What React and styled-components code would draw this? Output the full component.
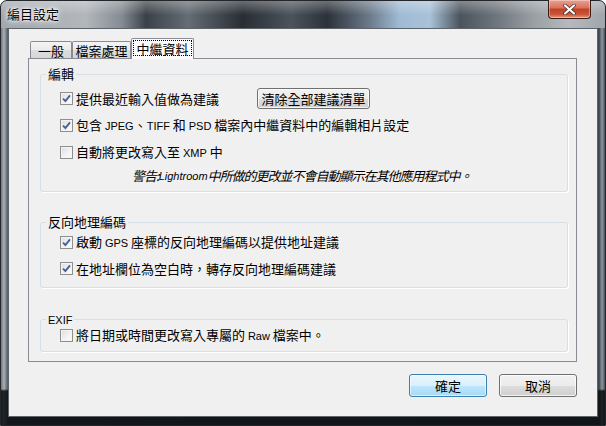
import React from 'react';
import styled, { createGlobalStyle } from 'styled-components';

const GlobalStyle = createGlobalStyle`
  html, body {
    margin: 0;
    padding: 0;
    background: #ffffff;
  }
  body {
    font-family: "Noto Sans CJK TC", "Liberation Sans", sans-serif;
    font-size: 13px;
    color: #000;
  }
`;

const Window = styled.div`
  width: 606px;
  height: 426px;
  box-sizing: border-box;
  display: flex;
  flex-direction: column;
  border: 1px solid #23272b;
  border-radius: 7px 7px 0 0;
  background:
    linear-gradient(180deg, rgba(255,255,255,0.3) 0px, rgba(255,255,255,0) 14px) top / 100% 27px no-repeat,
    linear-gradient(90deg, #a3a8ad 0%, #b3b7bb 14%, #858b92 20%, #3b4148 24%, #656c73 31%, #282e34 40%,
      #4c535b 48%, #2c3239 54%, #6b7a8a 61%, #9fbbd4 66%, #a8c2d8 71%, #4b545d 76%, #6e757c 82%,
      #999ea3 88%, #b6babe 94%, #a0a5aa 100%) top / 100% 27px no-repeat,
    linear-gradient(180deg, rgba(0,0,0,0) 0px, rgba(0,0,0,0) 388px, rgba(10,12,14,0.85) 390px),
    linear-gradient(90deg, #6f767d 0px, #a9afb5 3px, #50575e 7px, #3e444b 598px, #8d97a1 601px, #33393f 605px);
`;

const TitleBar = styled.div`
  height: 27px;
  display: flex;
  justify-content: space-between;
  align-items: flex-start;
  padding-left: 6px;
`;

const Title = styled.div`
  padding-top: 4px;
  line-height: 17px;
  font-size: 13px;
  text-shadow: 0 0 6px #fff, 0 0 4px #fff, 0 0 2px #fff;
`;

const CloseButton = styled.div`
  width: 43px;
  height: 19px;
  margin: -1px 14px 0 0;
  box-sizing: border-box;
  border: 1px solid #3a1a16;
  border-top: none;
  border-radius: 0 0 4px 4px;
  background: linear-gradient(180deg, #e8a293 0%, #d8705a 45%, #c23f22 50%, #c9553a 80%, #e79a7e 100%);
  box-shadow: inset 0 0 0 1px rgba(255,255,255,0.35);
  display: flex;
  align-items: center;
  justify-content: center;
`;

const Client = styled.div`
  flex: 1;
  margin: 0 7px 8px 7px;
  box-sizing: border-box;
  border: 1px solid #5d646b;
  background: #f0f0f0;
  display: flex;
  flex-direction: column;
  padding: 9px 20px 19px 19px;
`;

const TabStrip = styled.div`
  height: 20px;
  display: flex;
  align-items: flex-end;
  padding-left: 2px;
`;

const Tab = styled.div`
  box-sizing: border-box;
  width: ${p => p.$w}px;
  height: ${p => (p.$active ? 21 : 17)}px;
  margin-bottom: ${p => (p.$active ? -1 : 0)}px;
  position: relative;
  z-index: ${p => (p.$active ? 1 : 0)};
  border: 1px solid #898c95;
  border-bottom: none;
  border-radius: 2px 2px 0 0;
  background: ${p => (p.$active ? '#fbfbfb' : 'linear-gradient(180deg, #f4f4f4 0%, #ebebeb 50%, #dddddd 51%, #d6d6d6 100%)')};
  display: flex;
  padding: ${p => (p.$active ? '1px 1px 3px 1px' : '0')};
  align-items: center;
  justify-content: center;
  line-height: 15px;
`;

const FocusText = styled.span`
  flex: 1;
  align-self: stretch;
  display: flex;
  align-items: center;
  justify-content: center;
  outline: 1px dotted #000;
  outline-offset: -1px;
`;

const Panel = styled.div`
  border: 1px solid #898c95;
  background: #f0f0f0;
  padding: 8px 8px 9px 11px;
  display: flex;
  flex-direction: column;
`;

const Group = styled.fieldset`
  margin: 0;
  padding: 0;
  border: 1px solid #d5dfe5;
  border-radius: 3px;
  box-shadow: 1px 1px 0 #ffffff;
  margin-bottom: ${p => p.$after || 0}px;
`;

const Legend = styled.legend`
  margin-left: 5px;
  padding: 0 2px;
  line-height: 14px;
  height: 14px;
`;

const GroupBody = styled.div`
  padding: ${p => p.$top}px 0 ${p => p.$bottom}px 19px;
  display: flex;
  flex-direction: column;
`;

const Row = styled.div`
  height: ${p => p.$h}px;
  display: flex;
  align-items: center;
`;

const CheckLabel = styled.label`
  display: flex;
  align-items: center;
  gap: 3px;
  width: ${p => (p.$w ? `${p.$w}px` : 'auto')};
  line-height: 15px;
  white-space: nowrap;
`;

const Box = styled.span`
  width: 13px;
  height: 13px;
  box-sizing: border-box;
  flex: none;
  border: 1px solid #8e8f8f;
  background: linear-gradient(135deg, #dcdcdc 0%, #f0f0f0 50%, #ffffff 100%);
  box-shadow: inset 0 0 0 1px #f4f4f4;
  display: flex;
  align-items: center;
  justify-content: center;
`;

const Lat = styled.span`
  font-family: "Liberation Sans Narrow", "Liberation Sans", sans-serif;
  font-size: 11px;
  letter-spacing: 0;
`;

const Warning = styled.div`
  height: 19px;
  display: flex;
  align-items: center;
  justify-content: flex-start;
  padding-left: 72px;
  font-style: italic;
  letter-spacing: -1px;
  white-space: nowrap;
`;

const PushButton = styled.button`
  box-sizing: border-box;
  width: ${p => p.$w}px;
  height: ${p => p.$h}px;
  padding: 0;
  font-family: "Noto Sans CJK TC", "Liberation Sans", sans-serif;
  font-size: 13px;
  color: #000;
  border-radius: 3px;
  border: 1px solid ${p => (p.$default ? '#3c7fb1' : '#707070')};
  background: ${p => (p.$default
    ? 'linear-gradient(180deg, #eaf6fd 0%, #d9f0fc 50%, #bee6fd 51%, #a7d9f5 100%)'
    : 'linear-gradient(180deg, #f2f2f2 0%, #ebebeb 50%, #dddddd 51%, #cfcfcf 100%)')};
  box-shadow: inset 0 0 0 1px ${p => (p.$default ? 'rgba(255,255,255,0.6)' : 'rgba(255,255,255,0.75)')};
  display: flex;
  align-items: center;
  justify-content: center;
  line-height: 15px;
`;

const Footer = styled.div`
  margin-top: 12px;
  display: flex;
  justify-content: flex-end;
  gap: 12px;
`;

const Check = ({ checked }) => (
  <Box>
    {checked && (
      <svg width="9" height="9" viewBox="0 0 9 9">
        <path d="M1 4.6 L3.4 7 L8 1.4" fill="none" stroke="#4a5f95" strokeWidth="1.9" />
      </svg>
    )}
  </Box>
);

const Option = ({ checked, width, children }) => (
  <CheckLabel $w={width}>
    <Check checked={checked} />
    <span>{children}</span>
  </CheckLabel>
);

export default function App() {
  return (
    <>
      <GlobalStyle />
      <Window>
        <TitleBar>
          <Title>編目設定</Title>
          <CloseButton>
            <svg width="13" height="11" viewBox="0 0 13 11">
              <path d="M2 1.5 L11 9.5 M11 1.5 L2 9.5" stroke="#4a2a24" strokeWidth="3.6" strokeLinecap="round" />
              <path d="M2 1.5 L11 9.5 M11 1.5 L2 9.5" stroke="#ffffff" strokeWidth="2.2" strokeLinecap="round" />
            </svg>
          </CloseButton>
        </TitleBar>
        <Client>
          <TabStrip>
            <Tab $w={42}>一般</Tab>
            <Tab $w={59}>檔案處理</Tab>
            <Tab $w={63} $active><FocusText>中繼資料</FocusText></Tab>
          </TabStrip>
          <Panel>
            <Group $after={23}>
              <Legend>編輯</Legend>
              <GroupBody $top={4} $bottom={6}>
                <Row $h={27}>
                  <Option checked width={197}>提供最近輸入值做為建議</Option>
                  <PushButton $w={113} $h={21}>清除全部建議清單</PushButton>
                </Row>
                <Row $h={27}>
                  <Option checked>
                    包含 <Lat>JPEG</Lat>、<Lat>TIFF</Lat> 和 <Lat>PSD</Lat> 檔案內中繼資料中的編輯相片設定
                  </Option>
                </Row>
                <Row $h={27}>
                  <Option>自動將更改寫入至 <Lat>XMP</Lat> 中</Option>
                </Row>
                <Warning>警告:<Lat>Lightroom</Lat> 中所做的更改並不會自動顯示在其他應用程式中。</Warning>
              </GroupBody>
            </Group>
            <Group $after={24}>
              <Legend>反向地理編碼</Legend>
              <GroupBody $top={0} $bottom={6}>
                <Row $h={26}>
                  <Option checked>啟動 <Lat>GPS</Lat> 座標的反向地理編碼以提供地址建議</Option>
                </Row>
                <Row $h={26}>
                  <Option checked>在地址欄位為空白時，轉存反向地理編碼建議</Option>
                </Row>
              </GroupBody>
            </Group>
            <Group>
              <Legend><Lat>EXIF</Lat></Legend>
              <GroupBody $top={0} $bottom={7}>
                <Row $h={18}>
                  <Option>將日期或時間更改寫入專屬的 <Lat>Raw</Lat> 檔案中。</Option>
                </Row>
              </GroupBody>
            </Group>
          </Panel>
          <Footer>
            <PushButton $w={78} $h={23} $default>確定</PushButton>
            <PushButton $w={78} $h={23}>取消</PushButton>
          </Footer>
        </Client>
      </Window>
    </>
  );
}
